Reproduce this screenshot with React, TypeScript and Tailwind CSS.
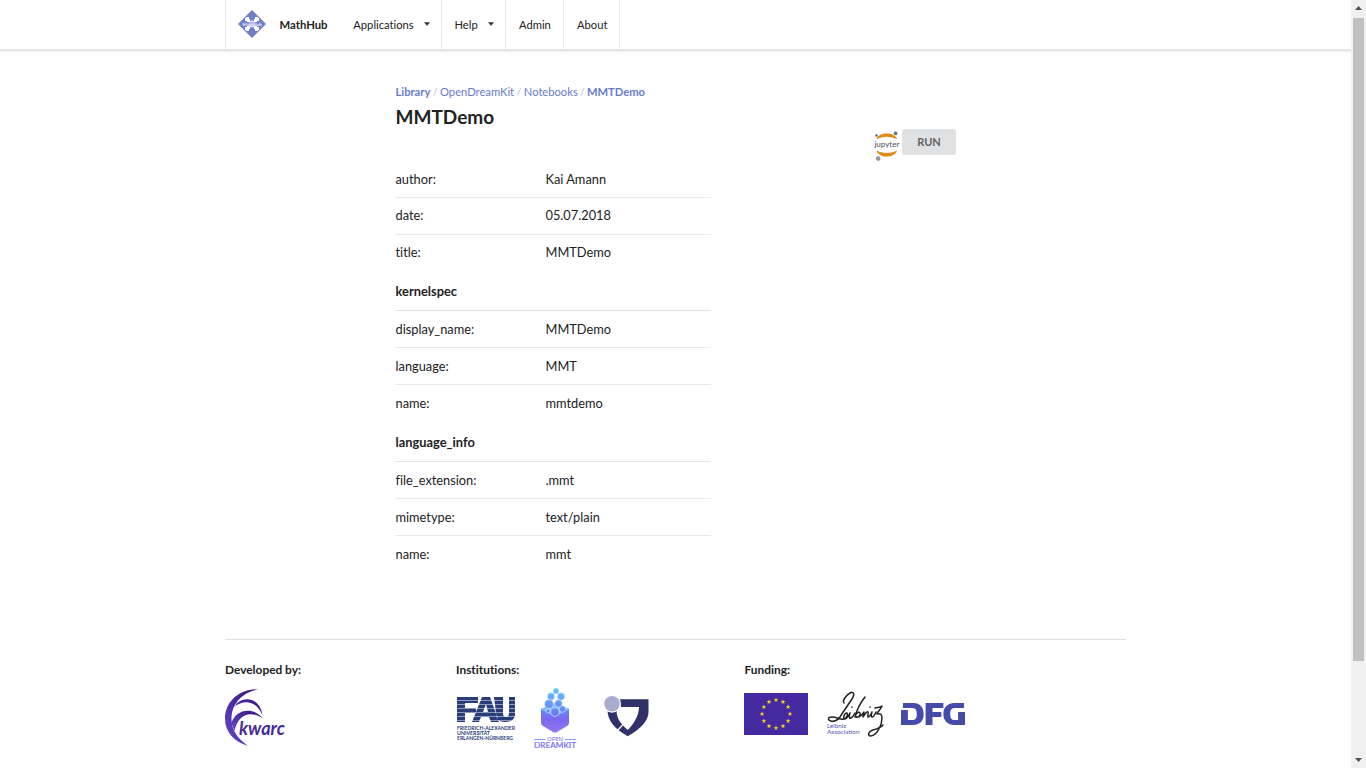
import React from 'react';

type RowProps = { label: string; value: string; last?: boolean; className?: string };

function Row({ label, value, last, className = 'pt-[2px]' }: RowProps) {
  return (
    <div className={`flex h-[37px] items-center border-b pl-[0.5px] text-[12.8px] ${className} ${last ? 'border-transparent' : 'border-[#e9e9ea]'}`}>
      <span className="w-[150px]">{label}</span>
      <span>{value}</span>
    </div>
  );
}

function Heading({ children, className }: { children: string; className: string }) {
  return <div className={`flex items-center border-b border-[#e4e4e5] pl-[0.5px] pt-[2px] text-[12.86px] font-bold ${className}`}>{children}</div>;
}

function Caret() {
  return (
    <svg className="mb-[3px] h-[4px] w-[6px]" viewBox="0 0 6 4">
      <path d="M0 .3h6L3 3.7z" fill="#333" />
    </svg>
  );
}

function MathHubLogo() {
  return (
    <svg className="-mt-[2px] h-7 w-7" viewBox="0 0 28 28">
      <path d="M14 0 28 14 14 28 0 14Z" fill="#6f7fc8" />
      <g fill="#fff">
        <path d="M8 7h3v2h1v3H9v-1H7V8h1zM20 7h-3v2h-1v3h3v-1h2V8h-1zM8 21h3v-2h1v-3H9v1H7v3h1zM20 21h-3v-2h-1v-3h3v1h2v3h-1z" />
        <ellipse cx="14" cy="14" rx="3.500" ry="3.500" opacity=".8" />
      </g>
      <path d="M4 12.200h20v3.600H4z" fill="#8492d1" opacity=".65" />
      <text x="4.500" y="15.600" fontSize="4.500" fontWeight="700" fill="#e8ebfa" fontFamily="Lato, sans-serif" textLength="19">MathHub</text>
    </svg>
  );
}

function JupyterLogo() {
  return (
    <svg className="h-[32px] w-[28px]" viewBox="0 0 28 32">
      <path d="M2.200 10.300C4 6.300 8 4.600 12.700 4.600s8.800 1.700 10.500 5.700C16.800 6.900 8.800 6.900 2.200 10.300Z" fill="#e28a13" />
      <path d="M2.200 21.600C4 25.600 8 27.600 12.700 27.600s8.800-2 10.500-6C16.800 24.800 8.800 24.800 2.200 21.600Z" fill="#e28a13" />
      <circle cx="21.600" cy="4.400" r="1.900" fill="#767677" />
      <circle cx="2.500" cy="6.500" r="1.300" fill="#68696a" />
      <circle cx="4.200" cy="29.600" r="2.300" fill="#989798" />
      <text x=".4" y="18.300" fontSize="7.500" fill="#4e4e4e" fontFamily="Lato, sans-serif" textLength="25" lengthAdjust="spacingAndGlyphs">jupyter</text>
    </svg>
  );
}

function KwarcLogo() {
  return (
    <svg className="h-[60px] w-[62px]" viewBox="0 0 62 60">
      <defs>
        <linearGradient id="kwarc" x1="0" y1="1" x2="1" y2="0">
          <stop offset="0" stopColor="#6548cf" />
          <stop offset="1" stopColor="#351075" />
        </linearGradient>
      </defs>
      <g fill="url(#kwarc)">
        <path d="M33 2.300C14 2 0 15 0 31.500 0 45 9 55 23 58.700 12 51 6 42 6.500 30 7 17 17 5.500 33 2.300Z" />
        <path d="M11.500 16.500C20 8.500 35 11 37.700 28.500 31.500 14.500 21 12 10 19Z" />
        <path d="M6.500 36C10 23.500 27 18.500 38 31.500 26 23.500 13.500 26 9.500 44Z" />
      </g>
      <text x="14" y="48" fontSize="18" fontWeight="700" fontStyle="italic" fill="#472a9e" fontFamily="Lato, sans-serif" textLength="46" lengthAdjust="spacingAndGlyphs">kwarc</text>
    </svg>
  );
}

function FauLogo() {
  return (
    <svg className="h-[45px] w-[60px]" viewBox="0 0 60 45">
      <path d="M1 1h21v6H9v5h11v5H9v9H1zM26 1h8l9 25h-8l-2-5h-8l-2 5h-7zM30 8l-3 8h5zM38 1h9v16q0 4 3 4t3-4V1h6v17q0 8-10 8-9 0-9-9z" fill="#293d7a" fillRule="evenodd" />
      <path d="M0 4.500h60M0 8.500h60M0 12.500h60M0 16.500h60M0 20.500h60M0 24.500h60" stroke="#fff" strokeWidth=".6" opacity=".8" />
      <g fontFamily="Lato, sans-serif" fontWeight="700" fontSize="5.200" fill="#293d7a">
        <text x="1" y="34" textLength="58" lengthAdjust="spacingAndGlyphs">FRIEDRICH-ALEXANDER</text>
        <text x="1" y="39" textLength="33" lengthAdjust="spacingAndGlyphs">UNIVERSITÄT</text>
        <text x="1" y="44" textLength="56" lengthAdjust="spacingAndGlyphs">ERLANGEN-NÜRNBERG</text>
      </g>
    </svg>
  );
}

function DreamKitLogo() {
  return (
    <svg className="h-[62px] w-[44px]" viewBox="0 0 44 62">
      <defs>
        <linearGradient id="box" x1="0" y1="0" x2="0" y2="1">
          <stop offset="0" stopColor="#5ca4f8" />
          <stop offset=".55" stopColor="#7c67f1" />
          <stop offset="1" stopColor="#9576ed" />
        </linearGradient>
        <linearGradient id="bubble" gradientUnits="userSpaceOnUse" x1="0" y1="1" x2="0" y2="29">
          <stop offset="0" stopColor="#5bc8fb" />
          <stop offset="1" stopColor="#7271f5" />
        </linearGradient>
      </defs>
      <path d="M8 22 22 16l14 6v14q0 2-2 3l-10 6q-2 1-4 0l-10-6q-2-1-2-3z" fill="url(#box)" />
      <path d="M8 22 22 16l14 6-14 8z" fill="#76c4fc" />
      <g fill="url(#bubble)" stroke="#e6f7ff" strokeWidth=".5">
        <circle cx="23" cy="4" r="3" />
        <circle cx="18" cy="9.500" r="3.700" />
        <circle cx="28" cy="9.500" r="3.700" />
        <circle cx="16" cy="17" r="4.500" />
        <circle cx="25.500" cy="16.500" r="3.800" />
        <circle cx="29.500" cy="22" r="3.200" />
        <circle cx="15" cy="24" r="2" />
        <circle cx="22" cy="25" r="4.300" />
      </g>
      <path d="M1 52.500h11M32 52.500h11" stroke="#788df5" strokeWidth=".9" />
      <g fontFamily="Lato, sans-serif" fill="#766cf2">
        <text x="14" y="54" fontSize="5.500" textLength="16" lengthAdjust="spacingAndGlyphs">OPEN</text>
        <text x="1" y="61" fontSize="7.500" stroke="#766cf2" strokeWidth=".2" textLength="42" lengthAdjust="spacingAndGlyphs">DREAMKIT</text>
      </g>
    </svg>
  );
}

function ShieldLogo() {
  return (
    <svg className="h-[42px] w-[46px]" viewBox="0 0 46 42">
      <path d="M15.500 4.300h29V17c0 9-8 17-20.800 24.300C10 33.500 3.500 25 3.500 15h9c0 8 3.500 13 11.200 20C29 30 35 21 35 12H17z" fill="#303169" />
      <path d="m13.500 35.500 5.500-6" stroke="#fff" strokeWidth="1.300" />
      <circle cx="8" cy="8.700" r="9" fill="#fff" />
      <circle cx="8" cy="8.700" r="7.800" fill="#aaaccd" />
    </svg>
  );
}

const STAR_POSITIONS = Array.from({ length: 12 }, (_, i) => {
  const a = (i * Math.PI) / 6;
  return [32 + 14 * Math.sin(a), 21 - 14 * Math.cos(a)];
});

function EuFlag() {
  return (
    <svg className="h-[42px] w-[64px]" viewBox="0 0 64 42">
      <path d="M0 0h64v42H0z" fill="#4429a0" />
      {STAR_POSITIONS.map(([x, y], i) => (
        <path key={i} transform={`translate(${x} ${y})`} d="M0-2.400.7-.8H2.400L1 .300 1.500 2.100 0 1l-1.500 1.100L-1 .300-2.400-.8H-.7z" fill="#f4d51e" />
      ))}
    </svg>
  );
}

function LeibnizLogo() {
  return (
    <svg className="h-[48px] w-[58px]" viewBox="0 0 58 48">
      <g fill="none" stroke="#222" strokeWidth="1.500" strokeLinecap="round" strokeLinejoin="round">
        <path d="M17 13c-2-2 2-8 6-10 4-2 5 1 2 6-4 6-9 13-12 18-2 3-6 5-9 4-4-1-3-4 1-4 5 0 8 3 12 2 3-1 4-5 3-6-2-1-5 6-2 6 2 0 4-4 5-6-1 3-1 6 1 5 2-1 3-3 4-5" />
        <path d="M38 7c-4 5-8 12-10 20 1-4 4-6 5-4 1 3-3 6-5 3 4 3 7-1 9-4l-1 5c2-3 4-6 5-5s-1 4 0 5c2 0 3-3 4-5-1 3-1 5 0 5 2 0 3-3 4-5M48 18c2-1 5 0 7-2-1 3-4 5-5 8 3-1 5 0 5 4 0 7-5 18-12 18-3-1-1-5 3-6 4-1 7-2 10-5" />
        <path d="M25 17v.200M43 17v.200" />
      </g>
      <g fontFamily="Lato, sans-serif" fontSize="5.800" fill="#5155ad">
        <text x="0" y="37.500" textLength="19" lengthAdjust="spacingAndGlyphs">Leibniz</text>
        <text x="0" y="43.700" textLength="32.500" lengthAdjust="spacingAndGlyphs">Association</text>
      </g>
    </svg>
  );
}

function DfgLogo() {
  return (
    <svg className="h-[22px] w-[64px]" viewBox="0 0 65 22" preserveAspectRatio="none">
      <g fill="#454ba9" fillRule="evenodd">
        <path d="M2 0h11c6 0 10 4 10 11s-4 11-11 11H0V7h7v10h4c4 0 5-2 5-6s-1-6-5-6H2z" />
        <path d="M25 0h18v5H32v4h9v5h-9v8h-7z" />
        <path d="M64 0H54c-6 0-11 4-11 11s5 11 11 11h11V9h-7v8h-3c-4 0-5-2-5-6s1-6 5-6h9z" />
      </g>
    </svg>
  );
}

export default function App() {
  return (
    <div className="flex h-screen overflow-hidden bg-white font-['Lato',sans-serif] text-[#212223] [font-variant-ligatures:none]">
      <div className="flex min-w-0 flex-1 flex-col">
        <header className="h-[51px] shrink-0 border-b-2 border-[#e4e4e5] pl-[225px] shadow-[0_1px_2px_rgba(34,36,38,0.08)]">
          <nav className="flex h-[49px] w-[395px] items-stretch border-x border-[#e9e9ea] text-[11.200px]">
            <a className="flex w-[115px] items-center pl-3 pt-[1px] text-[11.300px] font-bold"><MathHubLogo /><span className="ml-[13.500px]">MathHub</span></a>
            <a className="flex w-[101px] items-center justify-between border-r border-[#e9e9ea] pl-[12.300px] pr-[11px] pt-[2px]">Applications <Caret /></a>
            <a className="flex w-[64px] items-center justify-between border-r border-[#e9e9ea] pl-[12.500px] pr-[11.500px] pt-[2px]">Help <Caret /></a>
            <a className="flex w-[58px] items-center border-r border-[#e9e9ea] pl-[13px] pt-[2px]">Admin</a>
            <a className="flex items-center pl-[13px] pt-[2px]">About</a>
          </nav>
        </header>
        <main className="ml-[395px] h-[588px] w-[561px] shrink-0 pt-[33px]">
          <div className="flex h-4 items-center gap-[2.800px] pl-[0.5px] text-[11.200px] text-[#697bcf]">
            <b>Library</b><span className="text-[9px] text-[#bbb]">/</span>
            <span>OpenDreamKit</span><span className="text-[9px] text-[#bbb]">/</span>
            <span>Notebooks</span><span className="text-[9px] text-[#bbb]">/</span>
            <b className="-ml-[0.5px]">MMTDemo</b>
          </div>
          <div className="flex h-[61px] justify-between">
            <h1 className="pl-[0.5px] pt-[5px] text-[19px] font-bold leading-6">MMTDemo</h1>
            <div className="flex items-start pt-[29px]">
              <JupyterLogo />
              <button className="h-[26px] w-[54px] rounded-[3px] bg-[#e0e1e2] text-[11px] font-bold text-[#626364]">RUN</button>
            </div>
          </div>
          <section className="w-[316px]">
            <Row label="author:" value="Kai Amann" />
            <Row label="date:" value="05.07.2018" className="pt-0" />
            <Row label="title:" value="MMTDemo" className="pt-0" last />
            <Heading className="h-[39px]">kernelspec</Heading>
            <Row label="display_name:" value="MMTDemo" />
            <Row label="language:" value="MMT" />
            <Row label="name:" value="mmtdemo" last />
            <Heading className="h-[40px]">language_info</Heading>
            <Row label="file_extension:" value=".mmt" />
            <Row label="mimetype:" value="text/plain" />
            <Row label="name:" value="mmt" last />
          </section>
        </main>
        <footer className="ml-[225px] flex w-[901px] border-t border-[#dedede] pt-[21px] text-[11.900px]">
          <section className="w-[231px]">
            <h2 className="h-[18px] font-bold leading-[18px]">Developed by:</h2>
            <div className="pt-2"><KwarcLogo /></div>
          </section>
          <section className="w-[288px]">
            <h2 className="h-[18px] font-bold leading-[18px]">Institutions:</h2>
            <div className="flex items-start">
              <div className="pt-[17px]"><FauLogo /></div>
              <div className="ml-[17px] pt-[8px]"><DreamKitLogo /></div>
              <div className="ml-[27px] pt-[16px]"><ShieldLogo /></div>
            </div>
          </section>
          <section>
            <h2 className="h-[18px] pl-[0.5px] font-bold leading-[18px]">Funding:</h2>
            <div className="flex items-start">
              <div className="pt-[14px]"><EuFlag /></div>
              <div className="ml-[19px] pt-[11px]"><LeibnizLogo /></div>
              <div className="ml-[16px] pt-[24px]"><DfgLogo /></div>
            </div>
          </section>
        </footer>
      </div>
      <aside className="flex w-[15px] shrink-0 flex-col items-center bg-[#f1f1f1]">
        <svg className="h-[18px] w-[15px]" viewBox="0 0 15 18"><path d="M4 10h7L7.500 6z" fill="#505050" /></svg>
        <div className="h-[643px] w-[11px] bg-[#c1c1c1]" />
        <svg className="mt-auto h-[17px] w-[15px]" viewBox="0 0 15 17"><path d="M4 7h7l-3.500 4z" fill="#505050" /></svg>
      </aside>
    </div>
  );
}
